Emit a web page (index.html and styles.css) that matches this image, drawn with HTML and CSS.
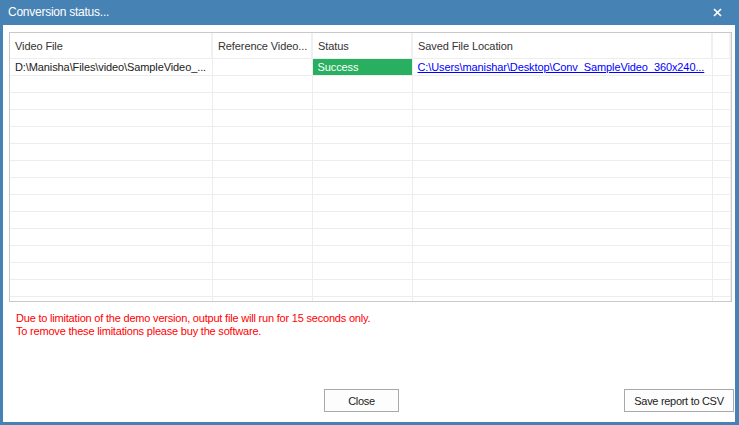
FILE: index.html
```html
<!DOCTYPE html>
<html lang="en">
<head>
  <meta charset="UTF-8" />
  <title>Conversion status...</title>
  <link rel="stylesheet" href="styles.css">
</head>
<body>
  <div class="window">
    <div class="titlebar">
      <span class="title">Conversion status...</span>
      <span class="close-x">
        <svg width="9" height="9" viewBox="0 0 9 9"><path d="M1 1 L8 8 M8 1 L1 8" stroke="#fff" stroke-width="1.7" fill="none"/></svg>
      </span>
    </div>

    <div class="content">
      <div class="grid">
        <table>
          <colgroup>
            <col style="width:202px">
            <col style="width:100px">
            <col style="width:100px">
            <col style="width:300px">
            <col>
          </colgroup>
          <thead>
            <tr>
              <th>Video File</th>
              <th>Reference Video...</th>
              <th>Status</th>
              <th>Saved File Location</th>
              <th></th>
            </tr>
          </thead>
          <tbody id="rows">
            <tr>
              <td>D:\Manisha\Files\video\SampleVideo_...</td>
              <td></td>
              <td class="success">Success</td>
              <td><a href="#">C:\Users\manishar\Desktop\Conv_SampleVideo_360x240...</a></td>
              <td></td>
            </tr>
          </tbody>
        </table>
      </div>

      <div class="notice">
        Due to limitation of the demo version, output file will run for 15 seconds only.<br>
        To remove these limitations please buy the software.
      </div>

      <div class="buttons">
        <button class="btn btn-close">Close</button>
        <button class="btn btn-save">Save report to CSV</button>
      </div>
    </div>
  </div>

  <script>
    // fill the grid with empty rows
    const rows = document.getElementById('rows');
    for (let i = 0; i < 15; i++) {
      const tr = document.createElement('tr');
      for (let j = 0; j < 5; j++) tr.appendChild(document.createElement('td'));
      rows.appendChild(tr);
    }
  </script>
</body>
</html>
```

FILE: styles.css
```css
body {
  margin: 0;
  font-family: "Liberation Sans", Arial, sans-serif;
  background-color: white;
}

.window {
  width: 739px;
  height: 425px;
  display: flex;
  flex-direction: column;
  background-color: #4682b4;
}

.titlebar {
  height: 25px;
  display: flex;
  align-items: center;
  padding-left: 8px;
  color: white;
  font-size: 12px;
  letter-spacing: -0.25px;
}

.title {
  flex: 1;
  padding-bottom: 1px;
}

.close-x {
  display: flex;
  width: 9px;
  height: 9px;
  margin-right: 17px;
}

.content {
  flex: 1;
  display: flex;
  flex-direction: column;
  margin: 0 4px 3px 3px;
  background-color: white;
}

.grid {
  margin: 7px 0 0 6px;
  width: 721px;
  height: 268px;
  border: 1px solid #c9c9c9;
  overflow: hidden;
}

table {
  width: 721px;
  table-layout: fixed;
  border-collapse: collapse;
  font-size: 11px;
  letter-spacing: -0.1px;
}

th,
td {
  padding: 0 0 0 5px;
  border-right: 1px solid #ededed;
  border-bottom: 1px solid #ededed;
  white-space: nowrap;
  overflow: hidden;
  text-align: left;
}

th {
  height: 24px;
  padding-top: 1px;
  font-weight: normal;
  color: #333;
  border-right: 2px solid #f0f0f0;
}

td {
  height: 16px;
  color: #222;
}

td.success {
  background-color: #29af60;
  color: white;
}

td a {
  color: #0000ff;
}

.notice {
  margin: 10px 0 0 13px;
  color: #ff0000;
  font-size: 11px;
  line-height: 13px;
  letter-spacing: -0.2px;
}

.buttons {
  margin-top: auto;
  margin-bottom: 10px;
  display: flex;
  padding: 0 1px 0 321px;
}

.btn {
  height: 23px;
  padding: 0;
  font-family: "Liberation Sans", Arial, sans-serif;
  font-size: 11px;
  letter-spacing: -0.3px;
  color: #222;
  background-color: #fdfdfd;
  border: 1px solid #a9a9a9;
}

.btn-close {
  width: 75px;
}

.btn-save {
  width: 110px;
  margin-left: auto;
}
```
